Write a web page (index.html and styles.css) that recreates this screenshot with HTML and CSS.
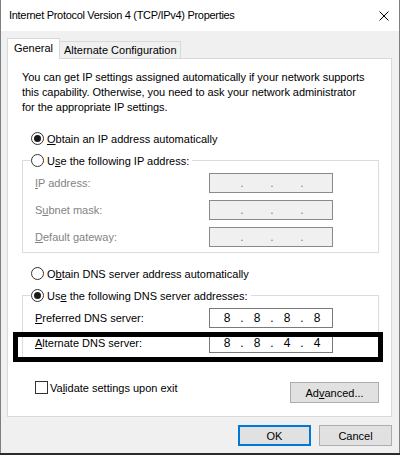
FILE: index.html
```html
<!DOCTYPE html>
<html lang="en">
<head>
<meta charset="utf-8">
<title>Internet Protocol Version 4 (TCP/IPv4) Properties</title>
<link rel="stylesheet" href="styles.css">
</head>
<body>
<div class="window">
  <div class="titlebar">
    <span class="title">Internet Protocol Version 4 (TCP/IPv4) Properties</span>
    <svg class="close" width="10" height="10" viewBox="0 0 10 10" aria-hidden="true">
      <path d="M0.5 0.5 L9.5 9.5 M9.5 0.5 L0.5 9.5" stroke="#000" stroke-width="1" fill="none"/>
    </svg>
  </div>
  <div class="content">
    <div class="tabs">
      <div class="tab tab-active">General</div>
      <div class="tab tab-other">Alternate Configuration</div>
    </div>
    <div class="panel">
      <p class="desc">You can get IP settings assigned automatically if your network supports<br>this capability. Otherwise, you need to ask your network administrator<br>for the appropriate IP settings.</p>

      <div class="option option-ip"><span class="radio radio-checked"></span><span><u>O</u>btain an IP address automatically</span></div>

      <div class="group group-ip">
        <div class="legend"><span class="radio"></span><span>U<u>s</u>e the following IP address:</span></div>
        <div class="fields fields-ip">
          <span class="field-label is-disabled"><u>I</u>P address:</span>
          <span class="ipbox is-disabled"><span class="oct"></span><span class="dot">.</span><span class="oct"></span><span class="dot">.</span><span class="oct"></span><span class="dot">.</span><span class="oct"></span></span>
          <span class="field-label is-disabled">S<u>u</u>bnet mask:</span>
          <span class="ipbox is-disabled"><span class="oct"></span><span class="dot">.</span><span class="oct"></span><span class="dot">.</span><span class="oct"></span><span class="dot">.</span><span class="oct"></span></span>
          <span class="field-label is-disabled"><u>D</u>efault gateway:</span>
          <span class="ipbox is-disabled"><span class="oct"></span><span class="dot">.</span><span class="oct"></span><span class="dot">.</span><span class="oct"></span><span class="dot">.</span><span class="oct"></span></span>
        </div>
      </div>

      <div class="option option-dns"><span class="radio"></span><span>O<u>b</u>tain DNS server address automatically</span></div>

      <div class="group group-dns">
        <div class="legend"><span class="radio radio-checked"></span><span>Us<u>e</u> the following DNS server addresses:</span></div>
        <div class="fields fields-dns">
          <span class="field-label"><u>P</u>referred DNS server:</span>
          <span class="ipbox"><span class="oct">8</span><span class="dot">.</span><span class="oct">8</span><span class="dot">.</span><span class="oct">8</span><span class="dot">.</span><span class="oct">8</span></span>
          <span class="field-label"><u>A</u>lternate DNS server:</span>
          <span class="ipbox"><span class="oct">8</span><span class="dot">.</span><span class="oct">8</span><span class="dot">.</span><span class="oct">4</span><span class="dot">.</span><span class="oct">4</span></span>
        </div>
      </div>

      <div class="panel-footer">
        <div class="check-row"><span class="checkbox"></span><span>Va<u>l</u>idate settings upon exit</span></div>
        <div class="btn btn-advanced">Ad<u>v</u>anced...</div>
      </div>

      <div class="highlight"></div>
    </div>
    <div class="buttons">
      <div class="btn btn-default">OK</div>
      <div class="btn">Cancel</div>
    </div>
  </div>
</div>
</body>
</html>
```
FILE: styles.css
```css
html, body {
  margin: 0;
  padding: 0;
}
body {
  width: 400px;
  height: 455px;
  overflow: hidden;
  background: #2b2b2b;
  font-family: "Liberation Sans", Arial, sans-serif;
  font-size: 11px;
  color: #000;
}
u {
  text-decoration: underline;
  text-underline-offset: 1px;
}
.window {
  width: 400px;
  height: 453px;
  box-sizing: border-box;
  background: #f0f0f0;
  border-left: 1px solid #7f7f7f;
  border-right: 1px solid #7f7f7f;
}
.titlebar {
  height: 31px;
  background: #fff;
  display: flex;
  align-items: center;
  justify-content: space-between;
  padding: 0 10px 0 8px;
}
.title {
  font-size: 11px;
  line-height: 15px;
  letter-spacing: -0.3px;
}
.close {
  display: block;
}
.content {
  padding: 7px 7px 0 6px;
}
.tabs {
  display: flex;
  align-items: flex-end;
  height: 20px;
}
.tab {
  box-sizing: border-box;
  white-space: nowrap;
}
.tab-active {
  position: relative;
  z-index: 1;
  width: 53px;
  height: 21px;
  margin-bottom: -1px;
  background: #fff;
  border: 1px solid #d9d9d9;
  border-bottom: none;
  text-align: center;
  line-height: 19px;
}
.tab-other {
  width: 121px;
  height: 17px;
  background: #f0f0f0;
  border-top: 1px solid #d9d9d9;
  border-right: 1px solid #d9d9d9;
  padding: 1px 0 0 4px;
  line-height: 15px;
}
.panel {
  position: relative;
  height: 359px;
  box-sizing: border-box;
  background: #fff;
  border: 1px solid #d9d9d9;
}
.desc {
  margin: 0;
  padding: 11px 0 0 14px;
  line-height: 15px;
  white-space: nowrap;
  letter-spacing: -0.05px;
}
.option {
  display: flex;
  align-items: center;
  gap: 3px;
  height: 15px;
  margin-left: 23px;
  white-space: nowrap;
}
.option-ip {
  margin-top: 16px;
}
.option-dns {
  margin-top: 13px;
}
.radio {
  width: 13px;
  height: 13px;
  box-sizing: border-box;
  border: 1px solid #333;
  border-radius: 50%;
  background: #fff;
  display: flex;
  align-items: center;
  justify-content: center;
  flex: none;
}
.radio-checked::after {
  content: "";
  width: 7px;
  height: 7px;
  border-radius: 50%;
  background: #1a1a1a;
}
.group {
  margin: 14px 12px 0 14px;
  border: 1px solid #dcdcdc;
  padding: 0 0 5px 12px;
}
.legend {
  display: flex;
  align-items: center;
  gap: 3px;
  width: fit-content;
  height: 15px;
  margin: -8px 0 0 -4px;
  padding-right: 3px;
  background: #fff;
  white-space: nowrap;
}
.fields {
  display: grid;
  grid-template-columns: 174px 124px;
  align-items: center;
  margin-top: 5px;
}
.fields-ip {
  row-gap: 7px;
}
.fields-dns {
  row-gap: 5px;
}
.field-label {
  white-space: nowrap;
}
.is-disabled {
  color: #838383;
}
.ipbox {
  display: flex;
  height: 20px;
  box-sizing: border-box;
  border: 1px solid #7a7a7a;
  background: #fff;
  padding-left: 4px;
  font-size: 12px;
  line-height: 18px;
}
.ipbox.is-disabled {
  background: #f0f0f0;
  border-color: #8a8a8a;
}
.oct {
  width: 26px;
  text-align: center;
}
.dot {
  width: 4px;
  text-align: center;
}
.panel-footer {
  display: flex;
  justify-content: space-between;
  align-items: flex-start;
  margin-top: 21px;
  padding: 0 12px 0 27px;
}
.check-row {
  display: flex;
  align-items: center;
  gap: 2px;
  height: 15px;
  white-space: nowrap;
}
.checkbox {
  width: 13px;
  height: 13px;
  box-sizing: border-box;
  border: 1px solid #333;
  background: #fff;
  flex: none;
}
.btn {
  box-sizing: border-box;
  width: 73px;
  height: 21px;
  background: #e1e1e1;
  border: 1px solid #adadad;
  display: flex;
  align-items: center;
  justify-content: center;
  white-space: nowrap;
}
.btn-advanced {
  width: 89px;
  margin-top: 2px;
}
.btn-default {
  border: 2px solid #0078d7;
}
.buttons {
  display: flex;
  justify-content: flex-end;
  gap: 8px;
  margin-top: 8px;
}
.highlight {
  position: absolute;
  top: 273px;
  left: 5px;
  width: 370px;
  height: 30px;
  box-sizing: border-box;
  border: 5px solid #000;
}
```
